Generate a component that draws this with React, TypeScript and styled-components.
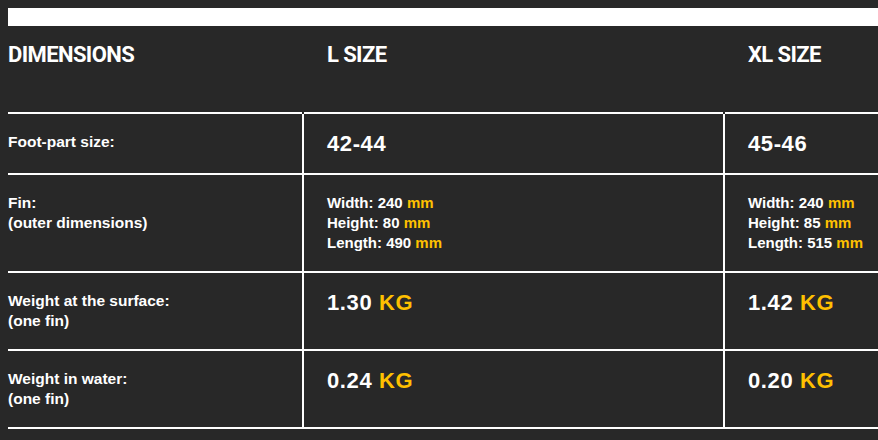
import styled, { createGlobalStyle } from "styled-components";

const GlobalStyle = createGlobalStyle`
  html, body {
    margin: 0;
    padding: 0;
    background: #282828;
    overflow: hidden;
  }
  body {
    padding: 8px 0 0 8px;
    font-family: "Liberation Sans", Arial, sans-serif;
    font-weight: bold;
    color: #ffffff;
  }
`;

const Page = styled.div`
  width: 1136px;
`;

const TopBar = styled.div`
  height: 18px;
  background: #ffffff;
`;

const Table = styled.table`
  width: 100%;
  border-collapse: collapse;
  table-layout: fixed;
`;

const HeadCell = styled.th<{ $first?: boolean }>`
  text-align: left;
  vertical-align: top;
  font-family: "Roboto", "Liberation Sans", sans-serif;
  font-size: 22px;
  line-height: 28px;
  letter-spacing: -0.6px;
  text-transform: uppercase;
  padding: 15px 0 0 ${(p) => (p.$first ? "0" : "23px")};
  height: 71px;
  border-left: ${(p) => (p.$first ? "none" : "2px solid transparent")};
`;

const Row = styled.tr`
  border-top: 2px solid #ffffff;
  border-bottom: 2px solid #ffffff;
`;

const Cell = styled.td<{ $first?: boolean }>`
  vertical-align: top;
  padding: 18px 0 18px ${(p) => (p.$first ? "0" : "23px")};
  font-size: ${(p) => (p.$first ? "15.5px" : "15px")};
  line-height: 20px;
  border-left: ${(p) => (p.$first ? "none" : "2px solid #ffffff")};
`;

const Big = styled.div`
  font-size: 22px;
  line-height: 23px;
  letter-spacing: 0.6px;
`;

const Unit = styled.span`
  color: #ffc000;
`;

const sizes = [
  { name: "L size", foot: "42-44", w: 240, h: 80, l: 490, surface: "1.30", water: "0.24" },
  { name: "XL size", foot: "45-46", w: 240, h: 85, l: 515, surface: "1.42", water: "0.20" },
];

export default function App() {
  return (
    <Page>
      <GlobalStyle />
      <TopBar />
      <Table>
        <colgroup>
          <col style={{ width: 295 }} />
          <col style={{ width: 421 }} />
          <col />
        </colgroup>
        <thead>
          <tr>
            <HeadCell $first>Dimensions</HeadCell>
            {sizes.map((s) => (
              <HeadCell key={s.name}>{s.name}</HeadCell>
            ))}
          </tr>
        </thead>
        <tbody>
          <Row>
            <Cell $first>Foot-part size:</Cell>
            {sizes.map((s) => (
              <Cell key={s.name}>
                <Big>{s.foot}</Big>
              </Cell>
            ))}
          </Row>
          <Row>
            <Cell $first>
              Fin:
              <br />
              (outer dimensions)
            </Cell>
            {sizes.map((s) => (
              <Cell key={s.name}>
                Width: {s.w} <Unit>mm</Unit>
                <br />
                Height: {s.h} <Unit>mm</Unit>
                <br />
                Length: {s.l} <Unit>mm</Unit>
              </Cell>
            ))}
          </Row>
          <Row>
            <Cell $first>
              Weight at the surface:
              <br />
              (one fin)
            </Cell>
            {sizes.map((s) => (
              <Cell key={s.name}>
                <Big>
                  {s.surface} <Unit>KG</Unit>
                </Big>
              </Cell>
            ))}
          </Row>
          <Row>
            <Cell $first>
              Weight in water:
              <br />
              (one fin)
            </Cell>
            {sizes.map((s) => (
              <Cell key={s.name}>
                <Big>
                  {s.water} <Unit>KG</Unit>
                </Big>
              </Cell>
            ))}
          </Row>
        </tbody>
      </Table>
    </Page>
  );
}
